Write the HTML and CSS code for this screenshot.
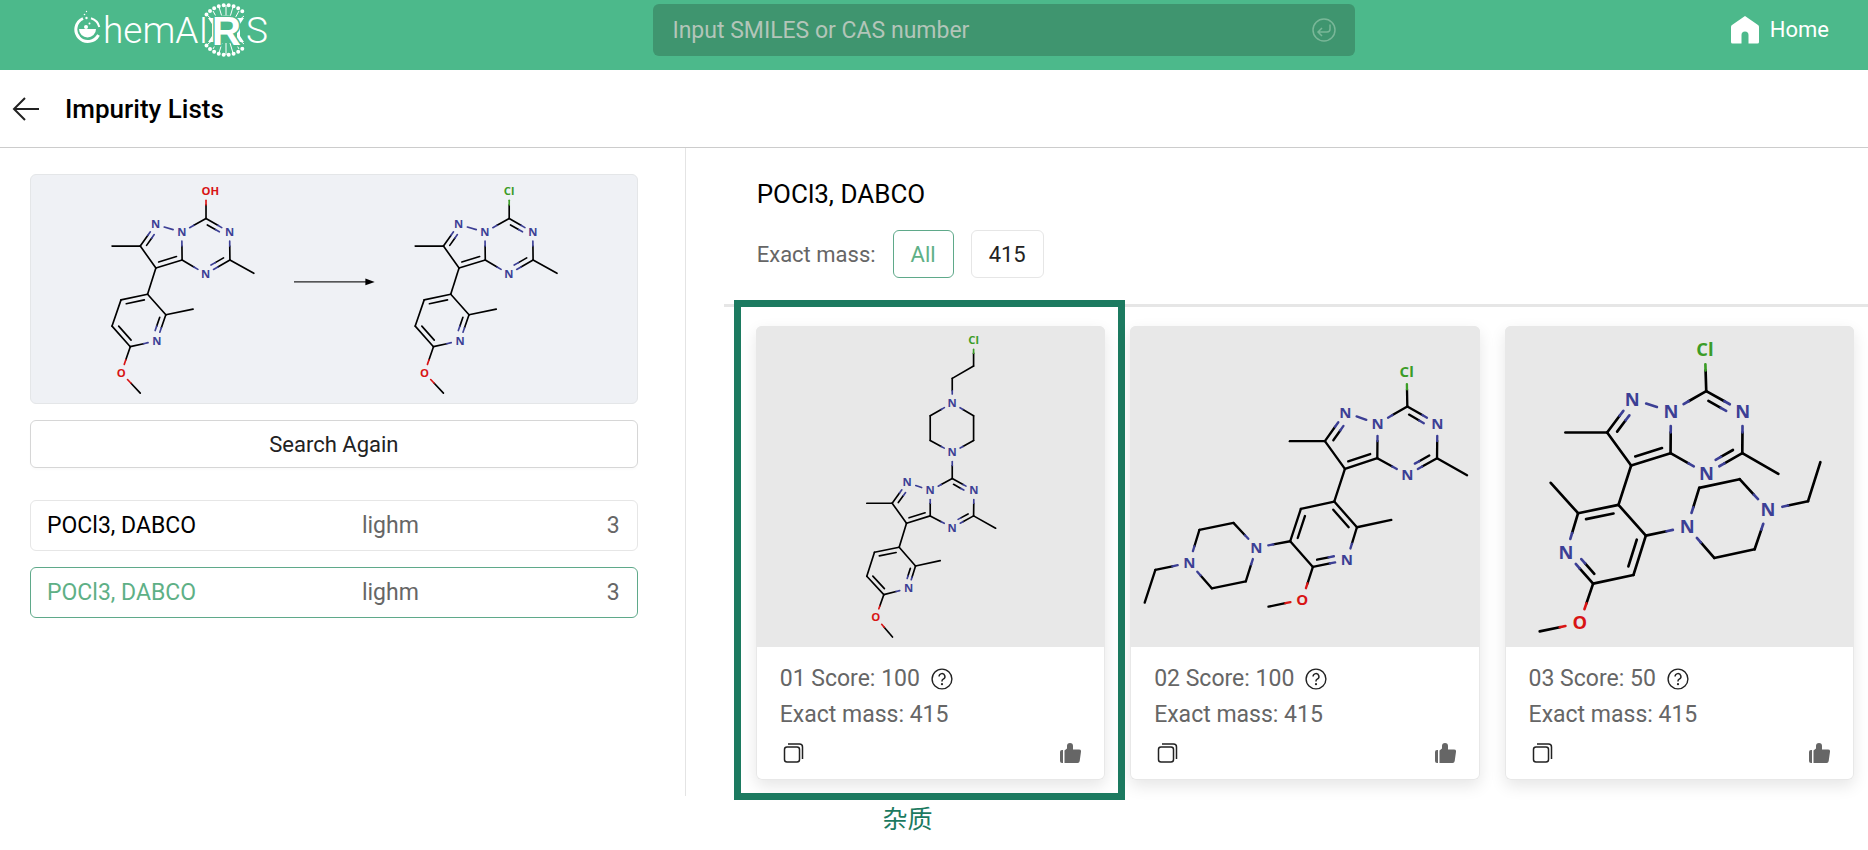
FILE: index.html
```html
<!DOCTYPE html>
<html lang="en">
<head>
    <meta charset="UTF-8">
    <meta name="viewport" content="width=device-width, initial-scale=1.0">
    <title>Impurity Lists</title>
    <link rel="stylesheet" href="styles.css">
</head>
<body>
    <!-- Shared icons -->
    <svg class="sprite" aria-hidden="true">
        <symbol id="icon-help" viewBox="0 0 24 24">
            <circle cx="12" cy="12" r="10.8" fill="none" stroke="currentColor" stroke-width="1.5"/>
            <path d="M8.8 9.3a3.2 3.2 0 1 1 4.6 2.9c-.9.5-1.4 1-1.4 2v.6" fill="none" stroke="currentColor" stroke-width="1.6"/>
            <circle cx="12" cy="17.6" r="1.2" fill="currentColor"/>
        </symbol>
        <symbol id="icon-copy" viewBox="0 0 20 20">
            <rect x="1" y="4" width="15" height="15" rx="2.5" fill="none" stroke="currentColor" stroke-width="1.5"/>
            <path d="M4.500 .9H16a3 3 0 0 1 3 3V16" fill="none" stroke="currentColor" stroke-width="1.5"/>
        </symbol>
        <symbol id="icon-like" viewBox="0 0 21 20">
            <path d="M0 9a2 2 0 0 1 2-2h1v13H2a2 2 0 0 1-2-2zM4.500 7.500 7 5.500V3a3 3 0 0 1 6 0v3.500h6a2 2 0 0 1 2 2.300l-1.300 9.300a2.200 2.200 0 0 1-2.200 1.900h-13z" fill="currentColor"/>
        </symbol>
    </svg>

    <header class="topbar">
        <a class="logo" href="#" aria-label="ChemAIRS">
            <svg viewBox="0 0 204 60">
                <path d="M9 18.500A12 12 0 1 0 24.500 35" class="logo-ring"/>
                <path d="M17 18.200A12 12 0 0 1 25.300 27" class="logo-arc"/>
                <path d="M5 29h17a8.500 8.500 0 0 1-17 0z" fill="#fff"/>
                <circle cx="12" cy="27" r="2" fill="#fff"/>
                <circle cx="15.500" cy="23.500" r="1" fill="#fff"/>
                <circle cx="12.500" cy="18" r="1.200" fill="#fff"/>
                <circle cx="10.500" cy="14.500" r=".8" fill="#fff"/>
                <circle cx="12.500" cy="11.500" r=".7" fill="#fff"/>
                <text x="29" y="43" class="logo-text">hemAI</text>
                <path d="M132.500 14.500A25 25 0 0 1 171.500 14.500M132.500 45.500A25 25 0 0 0 171.500 45.500" class="logo-dots"/>
                <path d="M134 16l7 6M139 11l5 9M145 7l3 10M152 5v12M159 7l-3 10M165 11l-5 9M170 16l-7 6M134 44l7-6M139 49l5-9M145 53l3-10M152 55V43M159 53l-3-10M165 49l-5-9M170 44l-7-6" class="logo-rays"/>
                <path d="M134 18h7v24h-7l4-6V24zM170 18h-7v24h7l-4-6V24zM143 18q9-6 18 0z" fill="#fff"/>
                <text x="138" y="45" class="logo-mark">R</text>
                <text x="172" y="43" class="logo-text">S</text>
            </svg>
        </a>
        <form class="search">
            <input type="text" id="query" placeholder="Input SMILES or CAS number" aria-label="Input SMILES or CAS number">
            <button type="submit" aria-label="Search">
                <svg viewBox="0 0 24 24" fill="none" stroke="currentColor" stroke-width="1.500">
                    <circle cx="12" cy="12" r="11"/>
                    <path d="M18 6.500V11a3 3 0 0 1-3 3H6M10 10l-4 4 4 4"/>
                </svg>
            </button>
        </form>
        <a class="home" href="#">
            <svg viewBox="0 0 28 28">
                <path d="M14 0 27 9q1 .7 1 2v15q0 1.500-1.500 1.500h-9V19a3.500 3.500 0 0 0-7 0v8.500h-9Q0 27.500 0 26V11q0-1.300 1-2z" fill="#fff"/>
            </svg>
            Home
        </a>
    </header>

    <div class="title-bar">
        <button class="back" aria-label="Back">
            <svg viewBox="0 0 28 24" fill="none" stroke="#222" stroke-width="2">
                <path d="M27 12H2M13 1 2 12l11 11"/>
            </svg>
        </button>
        <h1>Impurity Lists</h1>
    </div>

    <main class="content">
        <aside class="sidebar">
            <div class="reaction">
                <svg id="reaction" viewBox="30 29 1824 686" role="img" aria-label="Reaction"></svg>
            </div>
            <button class="search-again">Search Again</button>
            <button class="route">
                <span class="route-name">POCl3, DABCO</span>
                <span>lighm</span>
                <span>3</span>
            </button>
            <button class="route active">
                <span class="route-name">POCl3, DABCO</span>
                <span>lighm</span>
                <span>3</span>
            </button>
        </aside>

        <section class="results">
            <div class="results-head">
                <h2>POCl3, DABCO</h2>
                <div class="filter">
                    <span class="filter-label">Exact mass:</span>
                    <button class="active">All</button>
                    <button>415</button>
                </div>
            </div>

            <div class="cards">
                <article class="card">
                    <svg class="structure" id="impurity-1" viewBox="79 48 1047 962" role="img" aria-label="Impurity 01"></svg>
                    <div class="card-body">
                        <p>01 Score: 100 <svg class="help"><use href="#icon-help"/></svg></p>
                        <p>Exact mass: 415</p>
                        <div class="card-actions">
                            <button aria-label="Copy"><svg><use href="#icon-copy"/></svg></button>
                            <button class="like" aria-label="Like"><svg><use href="#icon-like"/></svg></button>
                        </div>
                    </div>
                    <div class="marker"><span lang="zh">杂质</span></div>
                </article>

                <article class="card">
                    <svg class="structure" id="impurity-2" viewBox="32 49 1047 962" role="img" aria-label="Impurity 02"></svg>
                    <div class="card-body">
                        <p>02 Score: 100 <svg class="help"><use href="#icon-help"/></svg></p>
                        <p>Exact mass: 415</p>
                        <div class="card-actions">
                            <button aria-label="Copy"><svg><use href="#icon-copy"/></svg></button>
                            <button class="like" aria-label="Like"><svg><use href="#icon-like"/></svg></button>
                        </div>
                    </div>
                </article>

                <article class="card">
                    <svg class="structure" id="impurity-3" viewBox="46 48 1047 962" role="img" aria-label="Impurity 03"></svg>
                    <div class="card-body">
                        <p>03 Score: 50 <svg class="help"><use href="#icon-help"/></svg></p>
                        <p>Exact mass: 415</p>
                        <div class="card-actions">
                            <button aria-label="Copy"><svg><use href="#icon-copy"/></svg></button>
                            <button class="like" aria-label="Like"><svg><use href="#icon-like"/></svg></button>
                        </div>
                    </div>
                </article>
            </div>
        </section>
    </main>

    <script src="molecules.js"></script>
</body>
</html>
```

FILE: styles.css
```css
* {
    box-sizing: border-box;
    margin: 0;
    padding: 0;
}

body {
    min-height: 100vh;
    background: #fff;
    color: #000;
    font-family: Roboto, 'Noto Sans CJK SC', sans-serif;
    font-size: 23px;
    line-height: 36px;
}

button, input {
    font: inherit;
    color: inherit;
    background: none;
    border: none;
}

button {
    cursor: pointer;
}

svg {
    display: block;
}

.sprite {
    position: absolute;
    width: 0;
    height: 0;
}

/* Top bar */
.topbar {
    display: flex;
    justify-content: space-between;
    align-items: center;
    padding: 4px 39px 14px 74px;
    background: #4cb98b;
}

.logo svg {
    width: 204px;
    height: 60px;
    margin: -4px 0;
}

.logo-text {
    font-family: Roboto, sans-serif;
    font-size: 37px;
    font-weight: 300;
    fill: #fff;
}

.logo-mark {
    font-family: 'Liberation Sans', sans-serif;
    font-size: 40px;
    font-weight: bold;
    fill: #fff;
    stroke: #4cb98b;
    stroke-width: 3px;
    paint-order: stroke;
}

.logo-ring {
    fill: none;
    stroke: #fff;
    stroke-width: 3;
}

.logo-arc {
    fill: none;
    stroke: #fff;
    stroke-width: 2;
}

.logo-dots {
    fill: none;
    stroke: #fff;
    stroke-width: 4;
    stroke-linecap: round;
    stroke-dasharray: 0 5;
}

.logo-rays {
    fill: none;
    stroke: #fff;
    stroke-width: 1;
}

.search {
    display: flex;
    align-items: center;
    width: 40%;
    height: 52px;
    padding: 0 19px;
    background: #3f956f;
    border-radius: 6px;
}

.search input {
    flex: 1;
    min-width: 0;
    padding-top: 2px;
    outline: none;
    color: #fff;
}

.search input::placeholder {
    color: #b3c5b9;
    opacity: 1;
}

.search button {
    color: #79b798;
}

.search svg {
    width: 24px;
    height: 24px;
}

.home {
    display: flex;
    align-items: center;
    gap: 11px;
    color: #fff;
    font-size: 22px;
    text-decoration: none;
}

.home svg {
    width: 28px;
    height: 28px;
}

/* Page title */
.title-bar {
    display: flex;
    align-items: center;
    gap: 25px;
    height: 78px;
    padding-left: 12px;
    border-bottom: 1px solid #ccc;
}

.back svg {
    width: 28px;
    height: 24px;
}

h1 {
    font-size: 26px;
    font-weight: 500;
}

.content {
    display: grid;
    grid-template-columns: 58fr 100fr;
}

/* Left column */
.sidebar {
    display: flex;
    flex-direction: column;
    gap: 16px;
    padding: 26px 47px 0 30px;
    border-right: 1px solid #e4e4e4;
}

.reaction {
    background: #eff1f5;
    border: 1px solid #e4e6e8;
    border-radius: 6px;
}

.reaction svg {
    width: 100%;
}

.search-again {
    height: 48px;
    padding-top: 2px;
    margin-bottom: 16px;
    color: #222;
    font-size: 22px;
    border: 1px solid #d6d6d6;
    border-radius: 6px;
    box-shadow: 0 2px 2px rgba(0, 0, 0, 0.02);
}

.route {
    display: grid;
    grid-template-columns: 9fr 7fr auto;
    align-items: center;
    height: 51px;
    padding: 2px 17px 0 16px;
    color: #666;
    text-align: left;
    border: 1px solid #e6e6e6;
    border-radius: 6px;
}

.route-name {
    color: #000;
}

.route.active {
    border-color: #5fa98a;
}

.route.active .route-name {
    color: #5eb086;
}

/* Right column */
.results {
    padding: 26px 0 16px 38px;
}

.results-head {
    padding: 0 33px 26px;
    border-bottom: 3px solid #e6e6e6;
}

h2 {
    font-size: 26px;
    font-weight: 400;
    line-height: 40px;
    margin-bottom: 16px;
}

.filter {
    display: flex;
    align-items: center;
    gap: 17px;
    font-size: 22px;
}

.filter-label {
    padding-top: 2px;
    color: #666;
}

.filter button {
    height: 48px;
    padding: 2px 17px 0;
    color: #222;
    border: 1px solid #e6e6e6;
    border-radius: 6px;
}

.filter button.active {
    color: #5eb086;
    border-color: #5fa98a;
}

.cards {
    display: grid;
    grid-template-columns: repeat(3, 1fr);
    gap: 25px;
    padding: 19px 14px 0 32px;
}

.card {
    position: relative;
    border-radius: 6px;
    box-shadow: 0 0 0 1px #e8e8e8 inset, 0 6px 16px rgba(0, 0, 0, 0.1);
}

.structure {
    width: 100%;
    background: #e8e8e8;
    border-radius: 6px 6px 0 0;
}

.card-body {
    padding: 14px 24px 8px;
    color: #666;
}

.card-body p {
    display: flex;
    align-items: center;
    gap: 11px;
}

.help {
    width: 22px;
    height: 22px;
    color: #222;
}

.card-actions {
    display: flex;
    justify-content: space-between;
    padding: 10px 0 9px 3px;
}

.card-actions svg {
    width: 21px;
    height: 20px;
    color: #222;
}

.card-actions .like svg {
    color: #666;
}

/* Highlight frame around a card, caption below it */
.marker {
    position: absolute;
    inset: -26px -20px -20px -22px;
    border: 7px solid #1c7a60;
    pointer-events: none;
}

.marker span {
    position: absolute;
    top: 100%;
    left: 0;
    right: 44px;
    padding-top: 6px;
    color: #1c7a60;
    font-family: 'Noto Sans CJK SC', sans-serif;
    font-size: 25px;
    text-align: center;
}

/* Chemical structures */
.bond {
    stroke: #000;
    stroke-linecap: round;
}

.atom {
    font-family: 'Open Sans', sans-serif;
    font-weight: 700;
}

.bond.N { stroke: #3c3f95; }
.bond.O { stroke: #d81414; }
.bond.Cl { stroke: #3b9c27; }
.atom.N { fill: #3c3f95; }
.atom.O { fill: #d81414; }
.atom.Cl { fill: #3b9c27; }
```

FILE: molecules.js
```js
const NS = "http://www.w3.org/2000/svg";

// Rings of the pyrazolo-triazine core and the pyridine
const rings = {
    triazine: ["c1", "n1", "c2", "n2", "c3", "n3"],
    pyrazole: ["n3", "n4", "c4", "c5", "c3"],
    pyridine: ["p1", "p2", "p3", "p4", "pN", "p6"]
};

// Bonds: "a-b" is single, "a=b:ring" is double with the inner line inside that ring
const core = "c1-n3 c1=n1:triazine n1-c2 c2=n2:triazine n2-c3 c3-n3 n3-n4 n4=c4:pyrazole c4-c5 c5=c3:pyrazole c2-m1 c4-m2 c5-p1 p6-m3 p4-O O-m4 ";
const pyridineA = "p1=p2:pyridine p2-p3 p3=p4:pyridine p4-pN pN=p6:pyridine p6-p1 ";
const pyridineB = "p1-p2 p2=p3:pyridine p3-p4 p4=pN:pyridine pN-p6 p6=p1:pyridine ";
const piperazine = "N1-a N1-d a-b b-N2 N2-c c-d ";

const reactant = {
    X: [558, 78, "OH"], c1: [558, 160], n1: [629, 201, "N"], c2: [630, 285], m1: [702, 325],
    n2: [557, 327, "N"], c3: [486, 285], n3: [485, 201, "N"], n4: [406, 178, "N"],
    c4: [360, 243], m2: [275, 243], c5: [407, 309], p1: [382, 388], p2: [302, 405],
    p3: [275, 484], p4: [330, 546], pN: [410, 528, "N"], p6: [437, 450], m3: [519, 433],
    O: [303, 625, "O"], m4: [360, 686]
};

const impurity1 = {
    X: [731, 91, "Cl"], e1: [731, 168], e2: [667, 205], N1: [667, 279, "N"], a: [731, 317],
    b: [731, 391], N2: [667, 427, "N"], c: [601, 391], d: [601, 317],
    c1: [667, 505], n1: [732, 541, "N"], c2: [731, 617], m1: [797, 654], n2: [667, 652, "N"],
    c3: [601, 617], n3: [601, 541, "N"], n4: [532, 517, "N"], c4: [487, 579], m2: [411, 579],
    c5: [530, 639], p1: [508, 711], p2: [434, 726], p3: [411, 798], p4: [462, 853],
    pN: [536, 834, "N"], p6: [557, 767], m3: [631, 751], O: [438, 921, "O"], m4: [488, 980]
};

const impurity2 = {
    X: [861, 187, "Cl"], c1: [863, 290], n1: [953, 342, "N"], c2: [952, 445], m1: [1042, 496],
    n2: [863, 495, "N"], c3: [773, 445], n3: [774, 342, "N"], n4: [677, 308, "N"],
    c4: [616, 394], m2: [511, 394], c5: [676, 477], p1: [644, 575], p2: [544, 597],
    p3: [512, 694], p4: [580, 771], pN: [682, 750, "N"], p6: [712, 652], m3: [815, 630],
    O: [548, 869, "O"], m4: [447, 890],
    N1: [411, 713, "N"], a: [379, 814], b: [277, 835], N2: [210, 758, "N"], c: [240, 660],
    d: [342, 639], e1: [108, 780], e2: [76, 878]
};

const impurity3 = {
    X: [645, 119, "Cl"], c1: [649, 243], n1: [758, 304, "N"], c2: [757, 429], m1: [865, 491],
    n2: [650, 490, "N"], c3: [542, 429], n3: [543, 304, "N"], n4: [427, 267, "N"],
    c4: [352, 367], m2: [227, 367], c5: [424, 466], p1: [386, 584], p2: [468, 676],
    p3: [431, 794], p4: [310, 820], pN: [229, 728, "N"], p6: [265, 609], m3: [183, 518],
    O: [270, 938, "O"], m4: [150, 963],
    N1: [592, 650, "N"], a: [628, 533], b: [749, 507], N2: [834, 599, "N"], c: [794, 717],
    d: [673, 743], e1: [954, 573], e2: [991, 456]
};

function add(parent, name, attrs, text) {
    const el = document.createElementNS(NS, name);
    for (const key in attrs) el.setAttribute(key, attrs[key]);
    if (text) el.textContent = text;
    parent.appendChild(el);
    return el;
}

function element(atom) {
    if (!atom[2]) return "C";
    return atom[2] === "OH" ? "O" : atom[2];
}

// One line between two atoms, each half in the colour of its own atom
function drawLine(g, a, b, size, width, shift, trim) {
    const dx = b[0] - a[0];
    const dy = b[1] - a[1];
    const length = Math.hypot(dx, dy);
    const start = Math.max(a[2] ? size * 0.8 / length : 0, trim);
    const end = 1 - Math.max(b[2] ? size * 0.8 / length : 0, trim);
    const point = t => [a[0] + dx * t + shift[0], a[1] + dy * t + shift[1]];
    const parts = element(a) === element(b)
        ? [[start, end, element(a)]]
        : [[start, 0.5, element(a)], [0.5, end, element(b)]];
    // coloured half goes over the black one
    parts.sort((p, q) => (p[2] === "C" ? 0 : 1) - (q[2] === "C" ? 0 : 1));
    for (const [from, to, name] of parts) {
        const [x1, y1] = point(from);
        const [x2, y2] = point(to);
        add(g, "line", { x1, y1, x2, y2, class: "bond " + name, "stroke-width": width });
    }
}

function drawMolecule(id, atoms, bonds, size, width, offsetX = 0) {
    const g = add(document.getElementById(id), "g", { transform: `translate(${offsetX} 0)` });

    for (const bond of bonds.trim().split(" ")) {
        const [pair, ring] = bond.split(":");
        const [a, b] = pair.split(/[-=]/).map(name => atoms[name]);
        drawLine(g, a, b, size, width, [0, 0], 0);
        if (ring) {
            const members = rings[ring].map(name => atoms[name]);
            const cx = members.reduce((sum, m) => sum + m[0], 0) / members.length;
            const cy = members.reduce((sum, m) => sum + m[1], 0) / members.length;
            const nx = -(b[1] - a[1]) * 0.18;
            const ny = (b[0] - a[0]) * 0.18;
            const side = nx * (cx - a[0]) + ny * (cy - a[1]) > 0 ? 1 : -1;
            drawLine(g, a, b, size, width, [nx * side, ny * side], 0.16);
        }
    }

    for (const atom of Object.values(atoms)) {
        if (!atom[2]) continue;
        // "OH" keeps its O above the bond
        const anchor = atom[2] === "OH" ? "start" : "middle";
        const x = atom[2] === "OH" ? atom[0] - size * 0.39 : atom[0];
        add(g, "text", {
            x, y: atom[1] + size * 0.35, class: "atom " + element(atom),
            "font-size": size, "text-anchor": anchor
        }, atom[2]);
    }
}

const product = { ...reactant, X: [558, 78, "Cl"] };
drawMolecule("reaction", reactant, core + pyridineA + "c1-X", 34, 5, -1);
drawMolecule("reaction", product, core + pyridineA + "c1-X", 34, 5, 912);

const reaction = document.getElementById("reaction");
add(reaction, "path", { d: "M822 351h220", stroke: "#222", "stroke-width": 4 });
add(reaction, "path", { d: "M1037 341l28 10-28 10z", fill: "#000" });

drawMolecule("impurity-1", impurity1, core + pyridineA + piperazine + "X-e1 e1-e2 e2-N1 N2-c1", 34, 5);
drawMolecule("impurity-2", impurity2, core + pyridineB + piperazine + "c1-X p3-N1 N2-e1 e1-e2", 45, 7);
drawMolecule("impurity-3", impurity3, core + pyridineB + piperazine + "c1-X p2-N1 N2-e1 e1-e2", 55, 8);
```
